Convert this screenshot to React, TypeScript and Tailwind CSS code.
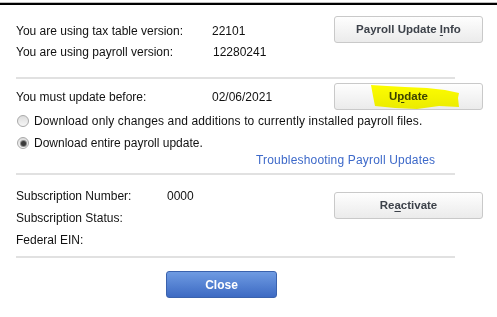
import type { ReactNode } from 'react';

// Payroll update dialog — QuickBooks-style "Get Payroll Updates" window

function GrayButton({ children, highlight = false }: { children: ReactNode; highlight?: boolean }) {
  return (
    <button className="relative w-[149px] h-[27px] rounded-[3px] border border-[#c9c9c9] bg-linear-to-b from-[#fefefe] to-[#ebebeb] text-[11.5px] font-bold text-[#3d424a]">
      {children}
      {highlight && (
        <svg
          className="absolute left-0 top-0 mix-blend-multiply pointer-events-none"
          width="149"
          height="27"
          viewBox="0 0 149 27"
        >
          <polygon
            points="36,1 52,2 70,3 92,4 110,6 124,9 123,14 124,23 104,22 82,25 60,24 40,22 38,12"
            fill="#ffff00"
          />
        </svg>
      )}
    </button>
  );
}

function Radio({ checked = false }: { checked?: boolean }) {
  return (
    <span className="shrink-0 ml-px w-[12px] h-[12px] rounded-full border border-[#a9a9a9] bg-linear-to-b from-[#dcdcdc] to-[#f7f7f7] flex items-center justify-center">
      {checked && <span className="w-[5px] h-[5px] rounded-full bg-[#3a3a3a] ring-1 ring-[#8a8a8a]" />}
    </span>
  );
}

function Sep() {
  return <div className="ml-4 w-[439px] h-[2px] bg-[#e1e1e1]" />;
}

export default function App() {
  return (
    <div className="w-[497px] h-[317px] overflow-hidden bg-white text-[12px] text-[#111] font-['Liberation_Sans',Arial,sans-serif]">
      {/* window top edge */}
      <div className="h-[2px]" />
      <div className="h-px bg-[#bdbdbd]" />
      <div className="h-[2px] bg-black" />

      {/* versions */}
      <div className="flex h-[72px] pl-4 pr-[14px]">
        <div className="flex-1 min-w-0 pt-4 leading-[21px]">
          <div className="flex">
            <span className="w-[196px]">You are using tax table version:</span>
            <span>22101</span>
          </div>
          <div className="flex">
            <span className="w-[197px]">You are using payroll version:</span>
            <span>12280241</span>
          </div>
        </div>
        <div className="shrink-0 pt-[11px]">
          <GrayButton>
            Payroll Update <span className="underline underline-offset-2">I</span>nfo
          </GrayButton>
        </div>
      </div>
      <Sep />

      {/* update options */}
      <div className="flex h-[94px] pl-4 pr-[14px]">
        <div className="flex-1 min-w-0 pt-[7px] leading-[22px]">
          <div className="flex">
            <span className="w-[196px]">You must update before:</span>
            <span>02/06/2021</span>
          </div>
          <div className="flex items-center gap-[5px] mt-[2px] whitespace-nowrap">
            <Radio />
            <span className="tracking-[0.13px]">
              Download only changes and additions to currently installed payroll files.
            </span>
          </div>
          <div className="flex items-center gap-[5px]">
            <Radio checked />
            <span>Download entire payroll update.</span>
          </div>
          <div className="-mt-[5px] pl-[240px] text-[#3d69c9] tracking-[0.18px] whitespace-nowrap">
            Troubleshooting Payroll Updates
          </div>
        </div>
        <div className="shrink-0 pt-[4px]">
          <GrayButton highlight>
            U<span className="underline underline-offset-2">p</span>date
          </GrayButton>
        </div>
      </div>
      <Sep />

      {/* subscription */}
      <div className="flex h-[81px] pl-4 pr-[14px]">
        <div className="flex-1 min-w-0 pt-[10px] leading-[22px]">
          <div className="flex">
            <span className="w-[151px]">Subscription Number:</span>
            <span>0000</span>
          </div>
          <div>Subscription Status:</div>
          <div>Federal EIN:</div>
        </div>
        <div className="shrink-0 pt-[17px]">
          <GrayButton>
            Re<span className="underline underline-offset-2">a</span>ctivate
          </GrayButton>
        </div>
      </div>
      <Sep />

      <div className="mt-[13px] ml-[166px]">
        <button className="w-[111px] h-[27px] rounded-[3px] border border-[#3a62ad] bg-linear-to-b from-[#6f9be2] to-[#3d6ac3] text-white font-bold text-[12px]">
          Close
        </button>
      </div>
    </div>
  );
}
